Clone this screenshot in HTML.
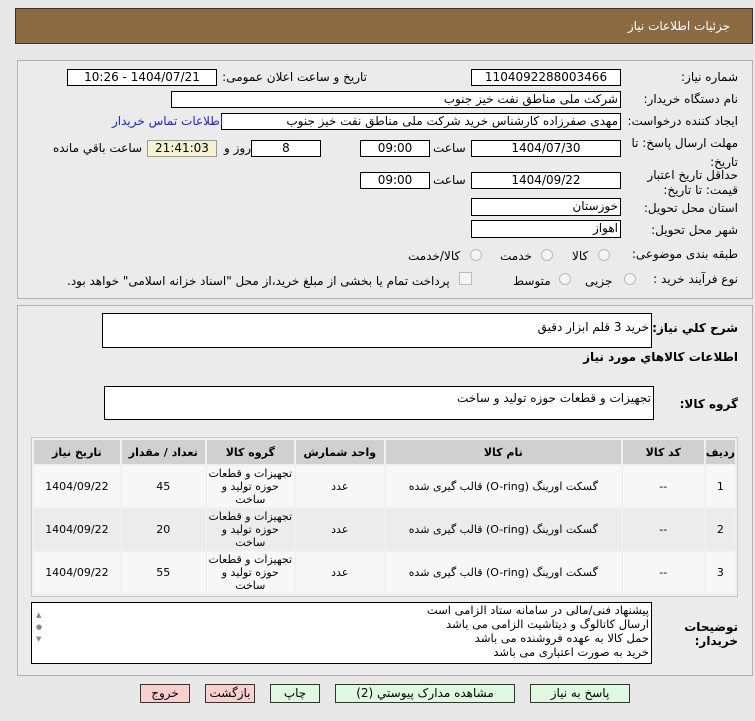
<!DOCTYPE html>
<html><head><meta charset="utf-8"><style>
*{box-sizing:border-box;margin:0;padding:0}
body{width:755px;height:721px;background:#e8e8e8;font-family:"DejaVu Sans","Liberation Sans",sans-serif;font-size:11px;color:#000;position:relative;overflow:hidden}
.a{position:absolute}
.hdr{left:15px;top:8px;width:738px;height:36px;background:#8c6b42;border:1px solid #333}
.hdr span{position:absolute;right:22px;top:10px;color:#fff;font-size:12px}
.pan{background:#ebebeb;border:1px solid #b0b0b0}
.lb{direction:rtl;text-align:right;white-space:nowrap}
.bx{background:#fff;border:1px solid #000;direction:rtl;text-align:right;padding:0 2px;font-size:12px;line-height:15px;white-space:nowrap;overflow:hidden}
.c{text-align:center}
.rad{width:12px;height:12px;border-radius:50%;border:1px solid #bbb;background:#f4f4f4}
table{border-collapse:separate;border-spacing:2px;background:#f0f0f0}
th{background:#d0d0d0;font-size:11px;font-weight:bold;height:24px}
td{background:#f7f7f7;text-align:center;font-size:11px;height:41px;line-height:13px}
tr.e td{background:#ececec}
.btn{border:1px solid #333;text-align:center;font-size:12px;line-height:16px;height:19px;top:684px}
</style></head><body>
<div class="a hdr"><span>جزئیات اطلاعات نیاز</span></div>
<div class="a pan" style="left:17px;top:60px;width:736px;height:239px"></div>
<div class="a pan" style="left:17px;top:305px;width:736px;height:371px"></div>

<div class="a lb" style="right:17px;top:70px;font-size:12px">شماره نیاز:</div>
<div class="a bx c" style="left:471px;top:69px;width:150px;height:17px">1104092288003466</div>
<div class="a lb" style="right:388px;top:70px;font-size:12px">تاریخ و ساعت اعلان عمومی:</div>
<div class="a bx c" style="left:67px;top:69px;width:150px;height:17px">1404/07/21 - 10:26</div>

<div class="a lb" style="right:17px;top:92px;font-size:12px">نام دستگاه خریدار:</div>
<div class="a bx" style="left:171px;top:91px;width:450px;height:17px">شرکت ملی مناطق نفت خیز جنوب</div>

<div class="a lb" style="right:17px;top:114px;font-size:12px">ایجاد کننده درخواست:</div>
<div class="a bx" style="left:221px;top:113px;width:400px;height:17px">مهدی صفرزاده کارشناس خرید شرکت ملی مناطق نفت خیز جنوب</div>
<div class="a lb" style="left:112px;top:114px;font-size:12px;color:#2222cc">اطلاعات تماس خریدار</div>

<div class="a lb" style="right:17px;top:134px;font-size:12px;line-height:19px">مهلت ارسال پاسخ: تا<br>تاریخ:</div>
<div class="a bx c" style="left:471px;top:140px;width:150px;height:17px">1404/07/30</div>
<div class="a lb" style="left:433px;top:141px;font-size:12px">ساعت</div>
<div class="a bx c" style="left:360px;top:140px;width:70px;height:17px">09:00</div>
<div class="a bx c" style="left:251px;top:140px;width:70px;height:17px">8</div>
<div class="a lb" style="left:224px;top:141px;font-size:12px">روز و</div>
<div class="a bx c" style="left:147px;top:140px;width:70px;height:17px;background:#f5f2d0;border-color:#999">21:41:03</div>
<div class="a lb" style="left:53px;top:141px;font-size:12px">ساعت باقي مانده</div>

<div class="a lb" style="right:17px;top:168px;font-size:12px;line-height:15px">حداقل تاریخ اعتبار<br>قیمت: تا تاریخ:</div>
<div class="a bx c" style="left:471px;top:172px;width:150px;height:17px">1404/09/22</div>
<div class="a lb" style="left:433px;top:173px;font-size:12px">ساعت</div>
<div class="a bx c" style="left:360px;top:172px;width:70px;height:17px">09:00</div>

<div class="a lb" style="right:17px;top:201px;font-size:12px">استان محل تحویل:</div>
<div class="a bx" style="left:471px;top:198px;width:150px;height:18px">خوزستان</div>
<div class="a lb" style="right:17px;top:223px;font-size:12px">شهر محل تحویل:</div>
<div class="a bx" style="left:471px;top:220px;width:150px;height:18px">اهواز</div>

<div class="a lb" style="right:17px;top:247px;font-size:12px">طبقه بندی موضوعی:</div>
<div class="a rad" style="left:598px;top:249px"></div><div class="a lb" style="left:572px;top:249px;font-size:12px">کالا</div>
<div class="a rad" style="left:541px;top:249px"></div><div class="a lb" style="left:500px;top:249px;font-size:12px">خدمت</div>
<div class="a rad" style="left:470px;top:249px"></div><div class="a lb" style="left:408px;top:249px;font-size:12px">کالا/خدمت</div>

<div class="a lb" style="right:17px;top:272px;font-size:12px">نوع فرآیند خرید :</div>
<div class="a rad" style="left:624px;top:273px"></div><div class="a lb" style="left:585px;top:274px;font-size:12px">جزیی</div>
<div class="a rad" style="left:559px;top:273px"></div><div class="a lb" style="left:513px;top:274px;font-size:12px">متوسط</div>
<div class="a" style="left:459px;top:272px;width:13px;height:13px;border:1px solid #bbb;background:#f4f4f4"></div>
<div class="a lb" style="left:67px;top:274px;font-size:12px">پرداخت تمام یا بخشی از مبلغ خرید،از محل "اسناد خزانه اسلامی" خواهد بود.</div>

<div class="a lb" style="right:17px;top:321px;font-size:12px;font-weight:bold">شرح کلي نیاز:</div>
<div class="a bx" style="left:102px;top:313px;width:550px;height:35px;line-height:26px">خرید 3 قلم ابزار دقیق</div>
<div class="a lb" style="right:17px;top:350px;font-size:12px;font-weight:bold">اطلاعات کالاهاي مورد نیاز</div>
<div class="a lb" style="right:17px;top:397px;font-size:12px;font-weight:bold">گروه کالا:</div>
<div class="a bx" style="left:104px;top:386px;width:550px;height:34px;line-height:22px">تجهیزات و قطعات حوزه تولید و ساخت</div>

<div class="a" style="left:31px;top:437px;width:707px;height:160px;border:1px solid #c8c8c8;background:#f0f0f0">
<table style="width:705px;direction:rtl">
<tr><th style="width:28px">ردیف</th><th style="width:81px">کد کالا</th><th style="width:235px">نام کالا</th><th style="width:88px">واحد شمارش</th><th style="width:87px">گروه کالا</th><th style="width:83px">تعداد / مقدار</th><th>تاریخ نیاز</th></tr>
<tr><td>1</td><td>--</td><td>گسکت اورینگ (O-ring) قالب گیری شده</td><td>عدد</td><td>تجهیزات و قطعات<br>حوزه تولید و<br>ساخت</td><td>45</td><td>1404/09/22</td></tr>
<tr class="e"><td>2</td><td>--</td><td>گسکت اورینگ (O-ring) قالب گیری شده</td><td>عدد</td><td>تجهیزات و قطعات<br>حوزه تولید و<br>ساخت</td><td>20</td><td>1404/09/22</td></tr>
<tr><td>3</td><td>--</td><td>گسکت اورینگ (O-ring) قالب گیری شده</td><td>عدد</td><td>تجهیزات و قطعات<br>حوزه تولید و<br>ساخت</td><td>55</td><td>1404/09/22</td></tr>
</table></div>

<div class="a lb" style="right:17px;top:620px;font-size:12px;font-weight:bold;line-height:14px">توضیحات<br>خریدار:</div>
<div class="a bx" style="left:31px;top:602px;width:621px;height:62px;line-height:14px;padding-left:18px;font-size:11.5px">پیشنهاد فنی/مالی در سامانه ستاد الزامی است<br>ارسال کاتالوگ و دیتاشیت الزامی می باشد<br>حمل کالا به عهده فروشنده می باشد<br>خرید به صورت اعتباری می باشد</div>
<div class="a" style="left:36px;top:609px;font-size:7px;color:#888;line-height:12px">▲<br>●<br>▼</div>

<div class="a btn" style="left:140px;width:50px;background:#f8d0d0">خروج</div>
<div class="a btn" style="left:205px;width:50px;background:#f8d0d0">بازگشت</div>
<div class="a btn" style="left:270px;width:50px;background:#e0f8e0">چاپ</div>
<div class="a btn" style="left:335px;width:180px;background:#e0f8e0">مشاهده مدارک پیوستي (2)</div>
<div class="a btn" style="left:530px;width:100px;background:#e0f8e0">پاسخ به نیاز</div>
</body></html>
